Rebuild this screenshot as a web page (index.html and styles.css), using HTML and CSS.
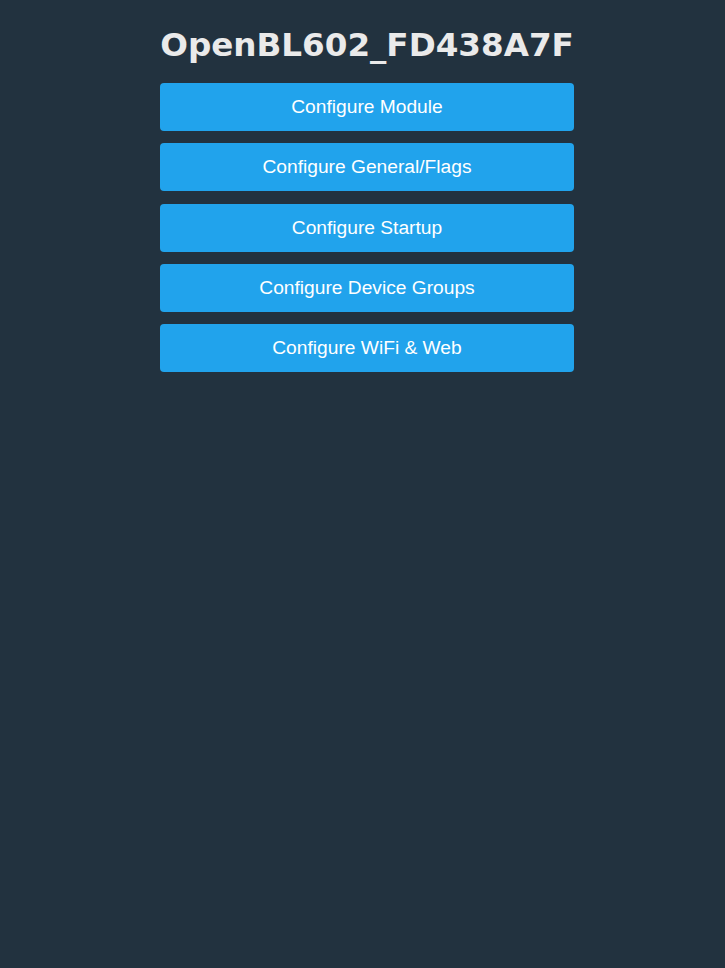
FILE: index.html
```html
<!DOCTYPE html>
<html lang="en">
<head>
  <meta charset="UTF-8">
  <title>OpenBL602_FD438A7F</title>
  <link rel="stylesheet" href="styles.css">
</head>
<body>
  <div class="main">
    <h2 class="title">OpenBL602_FD438A7F</h2>
    <div class="menu">
      <button class="btn">Configure Module</button>
      <button class="btn">Configure General/Flags</button>
      <button class="btn">Configure Startup</button>
      <button class="btn">Configure Device Groups</button>
      <button class="btn">Configure WiFi &amp; Web</button>
    </div>
  </div>
</body>
</html>
```

FILE: styles.css
```css
body { margin: 0; padding: 0 0 0 9px; background: #22323f; font-family: "DejaVu Sans", sans-serif; color: #eaeaea; }
.main { width: 414px; margin: 0 auto; }
.title { margin: 0; padding-top: 25px; height: 83px; box-sizing: border-box; font-size: 32.6px; line-height: 40px; text-align: center; font-weight: bold; }
.menu { display: flex; flex-direction: column; gap: 12.25px; }
.btn { height: 48px; border: 0; border-radius: 4px; background: #21a3ec; color: #fff; font-family: "Liberation Sans", Arial, sans-serif; font-size: 19.2px; cursor: pointer; padding: 0; }
```
